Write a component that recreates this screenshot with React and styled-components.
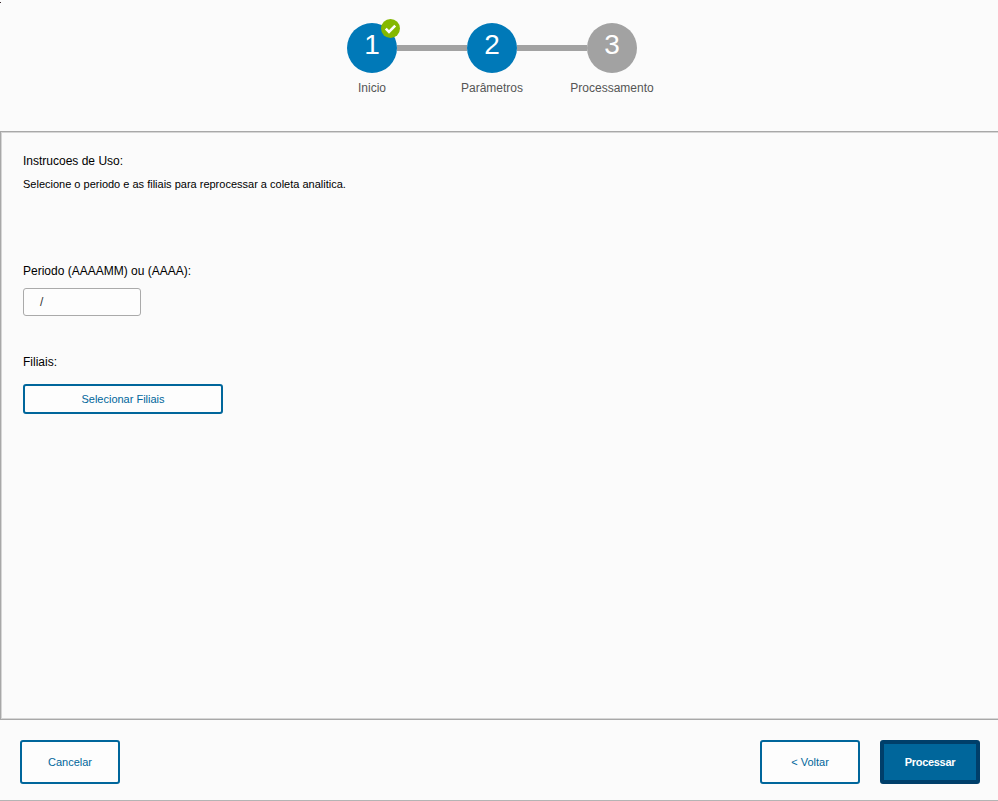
import React from "react";
import styled, { createGlobalStyle } from "styled-components";

const GlobalStyle = createGlobalStyle`
  html, body {
    margin: 0;
    padding: 0;
    background: #fbfbfb;
  }
  body {
    font-family: "Liberation Sans", Arial, sans-serif;
    color: #000;
  }
  * {
    box-sizing: border-box;
  }
`;

const Page = styled.div`
  position: relative;
  width: 998px;
  height: 801px;
  display: flex;
  flex-direction: column;
  background: #fbfbfb;
  overflow: hidden;
`;

const Speck = styled.span`
  position: absolute;
  left: 0;
  top: 2px;
  width: 1px;
  height: 1px;
  background: #3a2a30;
`;

const Header = styled.header`
  height: 131px;
  flex: none;
  padding: 23px 14px 0 0;
  display: flex;
  flex-direction: column;
  align-items: center;
`;

const Track = styled.div`
  display: flex;
  align-items: center;
`;

const Circle = styled.div`
  position: relative;
  width: 50px;
  height: 50px;
  border-radius: 50%;
  background: ${(p) => (p.$active ? "#0079b8" : "#a2a2a2")};
  color: #fff;
  font-size: 28px;
  line-height: 44px;
  text-align: center;
`;

const Connector = styled.div`
  width: 70px;
  height: 6px;
  background: #a2a2a2;
`;

const Badge = styled.span`
  position: absolute;
  top: -4px;
  right: -3px;
  width: 19px;
  height: 19px;
  border-radius: 50%;
  background: #85b800;
  display: flex;
  align-items: center;
  justify-content: center;
`;

const Labels = styled.div`
  display: grid;
  grid-template-columns: repeat(3, 120px);
  margin-top: 7px;
`;

const StepLabel = styled.div`
  font-size: 12px;
  line-height: 16px;
  color: #555;
  text-align: center;
  white-space: nowrap;
`;

const Panel = styled.main`
  height: 589px;
  flex: none;
  border-top: 1px solid #a8a8a8;
  border-left: 1px solid #a8a8a8;
  border-bottom: 1px solid #a8a8a8;
  box-shadow: inset 1px 1px 0 #d6d6d6, inset 0 -1px 0 #d6d6d6;
  padding: 21px 22px 0;
  display: flex;
  flex-direction: column;
  align-items: flex-start;
`;

const Title = styled.div`
  font-size: 12px;
  line-height: 16px;
`;

const Hint = styled.div`
  font-size: 11px;
  line-height: 14px;
  margin-top: 8px;
`;

const FieldLabel = styled.label`
  display: block;
  font-size: 12px;
  line-height: 16px;
  margin-top: ${(p) => p.$top}px;
`;

const MaskInput = styled.div`
  width: 118px;
  height: 28px;
  margin-top: 9px;
  padding-left: 16px;
  border: 1px solid #aaa;
  border-radius: 3px;
  background: #fdfdfd;
  font-size: 12px;
  line-height: 26px;
  color: #333;
`;

const Button = styled.button`
  width: ${(p) => p.$width || 100}px;
  height: ${(p) => p.$height || 44}px;
  padding: 0;
  border: ${(p) => (p.$primary ? "4px solid #003f6a" : "2px solid #00669b")};
  border-radius: 3px;
  background: ${(p) => (p.$primary ? "#00669b" : "#fdfdfd")};
  color: ${(p) => (p.$primary ? "#fff" : "#00669b")};
  font-family: inherit;
  font-size: 11px;
  font-weight: ${(p) => (p.$primary ? 700 : 400)};
  letter-spacing: ${(p) => (p.$primary ? "-0.3px" : "0")};
  cursor: pointer;
`;

const PickButton = styled(Button)`
  margin-top: 14px;
`;

const Footer = styled.footer`
  flex: 1;
  padding: 20px 18px 16px 20px;
  border-bottom: 1px solid #b4b4b4;
  display: flex;
  align-items: flex-start;
  justify-content: space-between;
`;

const FooterRight = styled.div`
  display: flex;
  gap: 20px;
`;

const steps = [
  { n: 1, label: "Inicio", active: true, done: true },
  { n: 2, label: "Parâmetros", active: true },
  { n: 3, label: "Processamento" },
];

const App = () => {
  return (
    <Page>
      <GlobalStyle />
      <Speck />
      <Header>
        <Track>
          {steps.map((s, i) => (
            <React.Fragment key={s.n}>
              {i > 0 && <Connector />}
              <Circle $active={s.active}>
                {s.n}
                {s.done && (
                  <Badge>
                    <svg width="13" height="13" viewBox="0 0 13 13">
                      <path
                        d="M1.8 6.6 L5 9.8 L11.2 3.6"
                        fill="none"
                        stroke="#fff"
                        strokeWidth="2.6"
                      />
                    </svg>
                  </Badge>
                )}
              </Circle>
            </React.Fragment>
          ))}
        </Track>
        <Labels>
          {steps.map((s) => (
            <StepLabel key={s.n}>{s.label}</StepLabel>
          ))}
        </Labels>
      </Header>
      <Panel>
        <Title>Instrucoes de Uso:</Title>
        <Hint>Selecione o periodo e as filiais para reprocessar a coleta analitica.</Hint>
        <FieldLabel $top={72}>Periodo (AAAAMM) ou (AAAA):</FieldLabel>
        <MaskInput>/</MaskInput>
        <FieldLabel $top={38}>Filiais:</FieldLabel>
        <PickButton $width={200} $height={30}>Selecionar Filiais</PickButton>
      </Panel>
      <Footer>
        <Button>Cancelar</Button>
        <FooterRight>
          <Button>&lt; Voltar</Button>
          <Button $primary>Processar</Button>
        </FooterRight>
      </Footer>
    </Page>
  );
};

export default App;
